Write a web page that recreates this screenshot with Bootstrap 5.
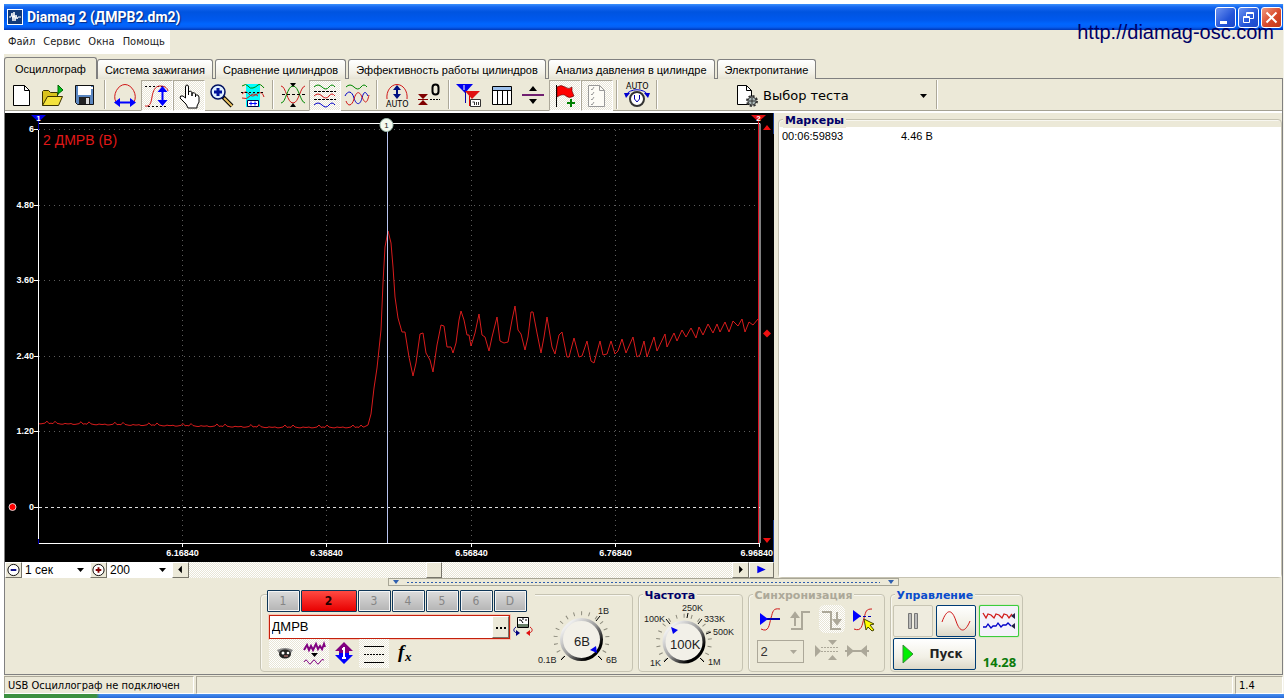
<!DOCTYPE html>
<html lang="ru">
<head>
<meta charset="utf-8">
<meta name="viewport" content="width=device-width, initial-scale=1">
<title>Diamag 2 (ДМРВ2.dm2)</title>
<link rel="stylesheet" href="https://cdn.jsdelivr.net/npm/bootstrap@5.3.0/dist/css/bootstrap.min.css">
<style>
:root{--face:#ece9d8;--edge:#808080;--soft:#c6c3b2;--navy:#000068}
body{background:#fff;color:#000;font:11px/14px "DejaVu Sans Condensed","DejaVu Sans",sans-serif}
svg{display:block}
.ms{font-family:"Liberation Sans",Arial,sans-serif;font-size:11px}
.app-window{background:var(--face);border-right:1px solid #f4f3ea}
.title-bar{height:26px;padding:0 1px 0 3px;background:linear-gradient(#3b90fb 0,#1667f0 3px,#0054e0 8px,#0059ee 16px,#0066ff 20px,#0560f5 23px,#0038b8 100%);color:#fff;font:bold 14px/26px Roboto,"Noto Sans",sans-serif}
.title-bar h1{font:inherit;text-shadow:1px 1px 1px #0a2a80}
.win-set{gap:2px}
.win-btn{width:21px;height:21px;border:1px solid #fff;border-radius:3px;background:linear-gradient(135deg,#6d93f0,#2354d8 60%,#1c48c8)}
.win-close{background:linear-gradient(135deg,#f09a80,#d8482a 55%,#c03818)}
.site-link{position:absolute;right:9px;top:16px;z-index:3;font:20px/24px "Liberation Sans",Arial,sans-serif;color:#000066;text-decoration:none}
.menu-bar{height:24px;width:166px;background:#fff}
.menu-bar a{color:#222;text-decoration:none;line-height:24px}
.tab-strip{height:22px;margin-top:3px;border-bottom:1px solid var(--edge)}
.tab-strip .tab-btn{height:20px;margin:2px 2px 0 0;border:1px solid var(--edge);border-bottom:0;border-radius:3px 3px 0 0;background:linear-gradient(#fff,#f2f0e6 70%,#e6e3d4);padding:0 7px;color:#000;white-space:nowrap;line-height:18px}
.tab-strip .tab-btn.active{height:22px;margin:0;background:var(--face);padding:0 10px}
.work{border-left:1px solid var(--edge);border-right:1px solid var(--edge);border-bottom:1px solid var(--edge)}
.tool-bar{height:34px;padding-top:1px;border-bottom:2px solid #fff;box-shadow:inset 0 -1px #a5a294}
.tool{width:32px;height:31px;padding:0;border:1px solid transparent;border-radius:0;flex:none}
.tool svg{width:30px;height:29px}
.on,.on:hover{background:repeating-conic-gradient(#fff 0 25%,#e8e5d6 0 50%) 0 0/2px 2px;border-color:#aca899 #fff #fff #aca899}
.sep{width:2px;height:29px;margin:0 3px;background:linear-gradient(90deg,#aca899 50%,#fff 50%);flex:none}
.plain-select{appearance:none;border:0;border-radius:0;padding:0 20px 0 3px;color:#000;background:#fff url("data:image/svg+xml,%3Csvg xmlns='http://www.w3.org/2000/svg' width='7' height='4'%3E%3Cpath d='M0 0h7L3.500 4z'/%3E%3C/svg%3E") no-repeat right 6px center}
.test-pick{margin-left:74px;width:198px}
.test-pick select{background-color:transparent;font:13px/18px "DejaVu Sans",sans-serif;padding-left:4px}
.scope{flex:769 1 0;min-width:0}
.scope-svg{width:100%;height:auto;background:#000;font-family:"Liberation Sans",Arial,sans-serif;font-size:9px}
.marks{flex:504 1 0;min-width:0}
.time-bar{height:16px}
.mini{width:17px;height:16px;padding:0;border:1px solid;border-color:#fff #77756a #77756a #fff;border-radius:0;background:var(--face);flex:none;display:grid;place-items:center}
.mini svg{width:15px;height:15px}
.time-bar .mini svg{height:14px}
.time-bar select{font:12px/16px "Liberation Sans",Arial,sans-serif;height:16px}
.scroll{appearance:none;flex:1 1 0;min-width:0;height:16px;margin:0;background:repeating-conic-gradient(#fff 0 25%,#e8e5d6 0 50%) 0 0/2px 2px}
.scroll::-webkit-slider-thumb{appearance:none;width:16px;height:16px;background:var(--face);border:1px solid;border-color:#fff #77756a #77756a #fff}
.group{position:relative;border:1px solid var(--soft);border-radius:4px;min-width:0;box-shadow:inset 1px 1px #f8f7f0}
.group legend{position:absolute;top:-6px;left:4px;float:none;width:auto;margin:0;padding:0 2px;background:var(--face);font:bold 11px/14px "DejaVu Sans",sans-serif;color:var(--navy);z-index:2}
.mark-list{background:#fff;margin-top:7px}
.mark-list td{padding:2px 3px;line-height:14px}
.splitter{height:9px}
.grip{width:40%;height:8px;border:1px solid #a8a696;padding:0 4px}
.dots{height:2px;flex:1;background:repeating-linear-gradient(90deg,#2f5fae 0 2px,transparent 2px 4px) 0 1px/auto 1px no-repeat}
.deck{padding:7px 5px 2px 0;gap:5px}
.deck .group{height:78px}
.chan-row{margin-top:-5px;margin-left:2px;width:268px;background:var(--face);gap:1px}
.chan{width:33px;height:22px;padding:0;border:1px solid #0f3658;border-radius:1px;background:linear-gradient(#dcdcdc,#b4b4b4);color:#858585;font-size:12px;box-shadow:inset 0 0 0 1px #f4f4f4}
.chan.cur{width:56px;background:linear-gradient(#ff4a42,#e80000);color:#200;font-weight:bold;box-shadow:none}
.name-row{margin-top:3px;gap:3px}
.name-box{width:241px;height:24px;border:1px solid #c4200c;background:#fff;box-shadow:0 0 0 1px #f8c4b4}
.name-box .mini{height:22px}
.name-box input{border:0;outline:0;min-width:0;flex:1;padding:0 2px;font:13px/20px "Liberation Sans",Arial,sans-serif}
.ico{width:30px;height:29px;padding:0;border:1px solid transparent;border-radius:0;flex:none}
.xp{height:32px;padding:0;border:1px solid #003c74;border-radius:2px;background:linear-gradient(#fff,#f2f0e6 60%,#dcd8c8);display:grid;place-items:center}
.xp.off{border-color:#c8c5b4;background:#efecdf}
.xp.live{border-color:#3ccc3c;background:#f4f2fa;box-shadow:0 0 1px #3c3}
.run{font:bold 12px/16px "DejaVu Sans",sans-serif;color:#222}
.rate{font:bold 13px/14px "Noto Sans",sans-serif;color:#0a7a0a}
.sync-select{width:47px;height:23px;margin-top:3px;border:1px solid #aca899;background-color:transparent;background-image:url("data:image/svg+xml,%3Csvg xmlns='http://www.w3.org/2000/svg' width='7' height='4'%3E%3Cpath fill='%23aca899' d='M0 0h7L3.500 4z'/%3E%3C/svg%3E");font:13px/20px "Liberation Sans",Arial,sans-serif;color:#333}
.status{height:18px;margin-top:1px;gap:2px}
.status div{border:1px solid;border-color:#aca899 #fff #fff #aca899;padding:0 3px;line-height:17px;white-space:nowrap}
.task{height:4px;background:linear-gradient(90deg,#3c9040 0 92px,transparent 96px),linear-gradient(#4a90ee,#2468d8)}
</style>
</head>
<body>
<div class="app-window mx-1 mt-1 position-relative">
  <header class="title-bar d-flex align-items-center">
    <svg width="16" height="16" viewBox="0 0 16 16" class="me-1"><rect x=".5" y=".5" width="15" height="15" fill="#123a78" stroke="#fff"/><path d="M2 8h2l1-4 1 8 1-9 1 9 1-6 1 4 1-2h3" fill="none" stroke="#fff"/></svg>
    <h1 class="m-0 flex-grow-1">Diamag 2 (ДМРВ2.dm2)</h1>
    <div class="d-flex win-set">
      <button class="btn p-0 win-btn" aria-label="Свернуть"><svg viewBox="0 0 19 19"><path d="M4 13h7v3H4z" fill="#fff"/></svg></button>
      <button class="btn p-0 win-btn" aria-label="Восстановить"><svg viewBox="0 0 19 19" fill="none" stroke="#fff"><path d="M4.500 8.500h6v6h-6zM4 9.500h7M7.500 8V4.500h7v6H11M7 5.500h8"/></svg></button>
      <button class="btn p-0 win-btn win-close" aria-label="Закрыть"><svg viewBox="0 0 19 19"><path d="M4.500 4.500l10 10m0-10l-10 10" stroke="#fff" stroke-width="2"/></svg></button>
    </div>
  </header>
  <a class="site-link" href="#">http://diamag-osc.com</a>

  <nav class="menu-bar d-flex ps-1 gap-2" aria-label="Меню">
    <a href="#">Файл</a><a href="#">Сервис</a><a href="#">Окна</a><a href="#">Помощь</a>
  </nav>

  <div class="tab-strip d-flex ms" role="tablist">
    <button class="tab-btn active" role="tab">Осциллограф</button>
    <button class="tab-btn" role="tab">Система зажигания</button>
    <button class="tab-btn" role="tab">Сравнение цилиндров</button>
    <button class="tab-btn" role="tab">Эффективность работы цилиндров</button>
    <button class="tab-btn" role="tab">Анализ давления в цилиндре</button>
    <button class="tab-btn" role="tab">Электропитание</button>
  </div>

  <main class="work">
    <div class="tool-bar d-flex">
      <button class="btn tool" aria-label="Новый"><svg viewBox="0 0 30 29"><path d="M7.500 4.500h11l5 5v15h-16z" fill="#fff" stroke="#000"/><path d="M18.500 4.500v5h5" fill="none" stroke="#000"/></svg></button>
      <button class="btn tool" aria-label="Открыть"><svg viewBox="0 0 30 29"><path d="M4.500 24.500v-14l1-1h5l2 2h7v4" fill="#d9c21c" stroke="#3a3200"/><path d="M4.500 24.500l5-9h15l-4 9z" fill="#f4e23c" stroke="#3a3200"/><path d="M20 14V4l5 5-5 4" fill="#00c020" stroke="#060"/></svg></button>
      <button class="btn tool" aria-label="Сохранить"><svg viewBox="0 0 30 29"><path d="M5.500 4.500h18v19H7.500l-2-2z" fill="#5a86c0" stroke="#111"/><path d="M8 5h13v9H8z" fill="#fff"/><path d="M9 16h11v7H9z" fill="#222"/><path d="M16 17h3v6h-3z" fill="#ddd"/><path d="M21 6h2v2h-2z" fill="#fff"/></svg></button>
      <span class="sep"></span>
      <button class="btn tool" aria-label="Период"><svg viewBox="0 0 30 29" fill="none"><path d="M6 21C2 14 8 3.500 15 3.500S28 14 24 21" stroke="#d01818"/><path d="M9 21.500h12" stroke="#00f" stroke-width="2"/><path d="M4 21.500l6-4.500v9zM26 21.500l-6-4.500v9z" fill="#00f"/></svg></button>
      <button class="btn tool on" aria-label="Амплитуда"><svg viewBox="0 0 30 29" fill="none"><path d="M3 5.500h18M6 25.500h20" stroke="#000" stroke-dasharray="2 2"/><path d="M3 25c5 1 6-3 7-9s3-11 8-11c4 0 7 1 8 5" stroke="#d01818"/><path d="M20.500 9v13" stroke="#00f" stroke-width="2"/><path d="M20.500 5l5 6h-10zM20.500 25l5-6h-10z" fill="#00f"/></svg></button>
      <button class="btn tool on" aria-label="Рука"><svg viewBox="0 0 30 29"><path d="M11.500 17V6q0-2 1.500-2t1.500 2v8-3q3-2 3.500 1v3-3q3-1 3.500 1v3-2q3-1 3.500 2v5l-2 4v2h-9l-2-4-6-6q0-3 3-2z" fill="#fff" stroke="#000"/></svg></button>
      <button class="btn tool" aria-label="Лупа"><svg viewBox="0 0 30 29"><path d="M17 16l9 9" stroke="#000" stroke-width="4"/><path d="M18 17l8 8" stroke="#e8c060" stroke-width="2"/><circle cx="12" cy="11" r="7" fill="#dff0ff" stroke="#001060" stroke-width="1.500"/><path d="M12 7v8M8 11h8" stroke="#00129a" stroke-width="3"/></svg></button>
      <button class="btn tool" aria-label="Фрагмент"><svg viewBox="0 0 30 29" fill="none"><path d="M8 3h14v23H8z" fill="#0ff"/><path d="M4 5q4-3 6 0t5 2 5-3 6 3" stroke="#080"/><path d="M4 13q4-4 7 0t8 0 7 3M4 17q5 2 8-2t8 0" stroke="#d01818"/><path d="M3 11.500h24" stroke="#000" stroke-dasharray="2 2"/><path d="M9.500 19.500h11v6h-11z" fill="#fff" stroke="#004"/><path d="M11 22.500h8M13 20.500v4M17 20.500v4" stroke="#00f"/></svg></button>
      <span class="sep"></span>
      <button class="btn tool" aria-label="Совместить"><svg viewBox="0 0 30 29" fill="none"><path d="M3 5c5 0 6 17 12 17S22 6 27 5" stroke="#d01818"/><path d="M3 22c5 0 6-17 12-17s7 16 12 17" stroke="#080"/><path d="M4 13.500h23" stroke="#000" stroke-dasharray="3 2"/><path d="M12 2h6l-3 4zM12 26h6l-3-4z" fill="#000"/></svg></button>
      <button class="btn tool on" aria-label="Разнести"><svg viewBox="0 0 30 29" fill="none"><path d="M4 6q4-4 8 0t7 0 6 0" stroke="#080"/><path d="M4 10.500h22M4 18.500h22" stroke="#000" stroke-dasharray="3 1"/><path d="M4 15q4-4 8 0t7 0 6 0" stroke="#d01818"/><path d="M4 24q4-4 8 0t7 0 6 0" stroke="#0000c8"/></svg></button>
      <button class="btn tool" aria-label="Наложить"><svg viewBox="0 0 30 29" fill="none"><path d="M4 6q4-4 8 0t7 0 6 0" stroke="#080"/><path d="M3 15c3-6 7-5 9 2s6 8 8 0 4-6 6-2" stroke="#0000c8"/><path d="M4 20c2 6 6 5 8-2s5-9 8-2 5 7 7-2" stroke="#d01818"/></svg></button>
      <span class="sep"></span>
      <button class="btn tool" aria-label="Авто масштаб"><svg viewBox="0 0 30 29" fill="none"><path d="M5 18C4 10 9 3.500 15 3.500S26 10 25 18" stroke="#d01818"/><path d="M15 7v9" stroke="#001080" stroke-width="2"/><path d="M15 4l4 5h-8zM15 18l4-5h-8z" fill="#001080"/><text x="4" y="26" font-family="DejaVu Sans" font-size="8" fill="#000">AUTO</text></svg></button>
      <button class="btn tool" aria-label="Ноль"><svg viewBox="0 0 30 29"><path d="M4 13h10l-5 5zM4 24h10l-5-5z" fill="#800000"/><path d="M4 18.500h10" stroke="#800000" /><rect x="18.500" y="3.500" width="6" height="10" rx="3" fill="none" stroke="#000" stroke-width="2"/><path d="M16 18.500h10" stroke="#000" stroke-dasharray="2 1"/></svg></button>
      <span class="sep"></span>
      <button class="btn tool" aria-label="Маркеры"><svg viewBox="0 0 30 29"><path d="M2 3h17l-8 9z" fill="#00e"/><path d="M11.500 10v12" stroke="#00a"/><path d="M11 10h15l-8 8z" fill="#e01010"/><path d="M15.500 15v10" stroke="#d00"/><path d="M10 4v5" stroke="#fff"/><path d="M16.500 18.500h10v7h-10z" fill="#fff" stroke="#333"/><path d="M18.500 21h2v3M22.500 21v3M24.500 21v3" stroke="#333" fill="none"/></svg></button>
      <button class="btn tool" aria-label="Таблица"><svg viewBox="0 0 30 29"><path d="M6.500 5.500h19v18h-19z" fill="#fff" stroke="#000"/><path d="M7 6h18v3H7z" fill="#9cc0ec"/><path d="M6 9.500h20M11.500 9v14M16.500 9v14M21.500 9v14" stroke="#000"/></svg></button>
      <button class="btn tool" aria-label="Разделить"><svg viewBox="0 0 30 29"><path d="M4 14h22" stroke="#702070" stroke-width="2"/><path d="M11 10h8l-4-5zM11 18h8l-4 5z"/></svg></button>
      <button class="btn tool on" aria-label="Флаг"><svg viewBox="0 0 30 29"><path d="M6.500 4v22" stroke="#000"/><path d="M7 6q4-3 8 0t7 0v4l2 5q-5 3-8 0t-9 1z" fill="#f00" stroke="#500" stroke-width=".6"/><path d="M21 18v8M17 22h8" stroke="#008000" stroke-width="2"/></svg></button>
      <button class="btn tool on" aria-label="Список"><svg viewBox="0 0 30 29" fill="none"><path d="M6.500 4.500h11l5 5v16h-16z" fill="#fdfcf6" stroke="#999"/><path d="M17.500 4.500v5h5" stroke="#999"/><path d="M9 8l1 1 2-3M9 13l1 1 2-3M9 18l1 1 2-3M9 23l1 1 2-3" stroke="#999"/></svg></button>
      <span class="sep"></span>
      <button class="btn tool" aria-label="Авто напряжение"><svg viewBox="0 0 30 29" fill="none"><text x="4" y="8" font-family="DejaVu Sans" font-size="8" fill="#000">AUTO</text><path d="M4 14c4-7 18-7 22 0" stroke="#0000d0"/><path d="M2 12h6l-4 5zM28 12h-6l4 5z" fill="#0000d0"/><circle cx="15" cy="18" r="7" fill="#fff" stroke="#333" stroke-width="2"/><path d="M12.500 14v4l2.500 3 2.500-3v-4" stroke="#00a"/></svg></button>
      <span class="sep"></span>
      <label class="test-pick d-flex align-items-center">
        <svg width="24" height="26" viewBox="0 0 24 26" class="flex-shrink-0"><path d="M2.500 2.500h9l5 5v14h-14z" fill="#fff" stroke="#000"/><path d="M11.500 2.500v5h5" fill="none" stroke="#000"/><circle cx="17" cy="18" r="4.500" fill="#aab4b4" stroke="#333" stroke-width="3" stroke-dasharray="2 1.500"/><circle cx="17" cy="18" r="4" fill="#aab8b8" stroke="#444"/><path d="M14 18h6M17 15v6" stroke="#333"/></svg>
        <select class="plain-select flex-grow-1" aria-label="Выбор теста"><option>Выбор теста</option></select>
      </label>
      <span class="sep"></span>
    </div>

    <div class="d-flex">
      <section class="scope" aria-label="Осциллограмма">
        <svg class="scope-svg" viewBox="5 113 769 449" role="img">
          <g stroke="#5c5c5c" stroke-dasharray="1 4">
            <path d="M182.500 130V543M326.500 130V543M471.500 130V543M615.500 130V543"/>
            <path d="M39 129.500H758M39 205.500H758M39 280.500H758M39 356.500H758M39 431.500H758"/>
          </g>
          <path d="M39 507.500H760" stroke="#ddd" stroke-dasharray="3 3"/>
          <path id="trace" fill="none" stroke="#d81c1c" d=""/>
          <path d="M38.500 124V543.500H760M38 123.500H760V543M34 129.500h5M34 205.500h5M34 280.500h5M34 356.500h5M34 431.500h5M34 507.500h5M182.500 543v4M326.500 543v4M471.500 543v4M615.500 543v4M759.500 543v4" fill="none" stroke="#fff"/>
          <path d="M758.500 121V543" stroke="#e01020"/>
          <path d="M387.500 130V543" stroke="#b8c4f0"/>
          <path d="M38.500 121v9M38.500 539v5" stroke="#0000b0"/>
          <path d="M773.500 113v21M773.500 520v42" stroke="#1a3c90"/>
          <path d="M31 115h15l-7.500 7z" fill="#0000e8"/><path d="M751 115h15l-7.500 7z" fill="#e01010"/>
          <circle cx="386.500" cy="125" r="6.500" fill="#f4faf0" stroke="#a8c8b8"/>
          <path d="M763 130h8l-4-5zM763 538h8l-4 5zM763 333.500l4-4 4 4-4 4z" fill="#f01010"/>
          <circle cx="12.500" cy="507" r="3.500" fill="#f00" stroke="#fff" stroke-width=".8"/>
          <g fill="#fff" font-size="8" font-weight="bold" text-anchor="middle"><text x="38.500" y="121">1</text><text x="758.500" y="121">2</text><text x="386.500" y="128" fill="#222" font-weight="normal">1</text></g>
          <g fill="#fff" font-weight="bold" text-anchor="end"><text x="34" y="132">6</text><text x="34" y="208">4.80</text><text x="34" y="283">3.60</text><text x="34" y="359">2.40</text><text x="34" y="434">1.20</text><text x="34" y="510">0</text></g>
          <g fill="#fff" font-weight="bold" text-anchor="middle"><text x="182.500" y="556">6.16840</text><text x="326.500" y="556">6.36840</text><text x="471.500" y="556">6.56840</text><text x="615.500" y="556">6.76840</text><text x="773" y="556" text-anchor="end">6.96840</text></g>
          <text x="43" y="145" font-size="14" fill="#e01818">2 ДМРВ (В)</text>
        </svg>
        <div class="time-bar d-flex">
          <button class="btn mini" aria-label="Уменьшить"><svg viewBox="0 0 15 15"><circle cx="7.500" cy="7.500" r="6" fill="#fff" stroke="#000"/><path d="M4.500 7.500h6" stroke="#000080" stroke-width="2"/></svg></button>
          <select class="plain-select" style="width:68px" aria-label="Развёртка"><option>1 сек</option></select>
          <button class="btn mini" aria-label="Увеличить"><svg viewBox="0 0 15 15"><circle cx="7.500" cy="7.500" r="6" fill="#fff" stroke="#000"/><path d="M4.500 7.500h6M7.500 4.500v6" stroke="#800000" stroke-width="2"/></svg></button>
          <select class="plain-select" style="width:65px" aria-label="Масштаб"><option>200</option></select>
          <button class="btn mini" aria-label="Влево"><svg viewBox="0 0 15 15"><path d="M9 3v8L5 7z"/></svg></button>
          <input type="range" class="scroll" min="0" max="100" value="45" aria-label="Прокрутка">
          <button class="btn mini" aria-label="Вправо"><svg viewBox="0 0 15 15"><path d="M6 3v8l4-4z"/></svg></button>
          <button class="btn mini w-auto px-1" aria-label="Воспроизвести"><svg viewBox="0 0 15 15"><path d="M3 3v8l9-4z" fill="#00e"/></svg></button>
        </div>
      </section>
      <section class="marks d-flex ps-1 pt-1">
        <fieldset class="group flex-grow-1 d-flex" style="margin-top:2px">
          <legend>Маркеры</legend>
          <div class="mark-list flex-grow-1">
            <table class="ms"><tbody><tr><td style="width:119px">00:06:59893</td><td>4.46 В</td></tr></tbody></table>
          </div>
        </fieldset>
      </section>
    </div>

    <div class="splitter">
      <div class="grip mx-auto d-flex align-items-center gap-2">
        <svg width="6" height="4"><path d="M0 0h6L3 4z" fill="#2f5fae"/></svg><span class="dots"></span><svg width="6" height="4"><path d="M0 0h6L3 4z" fill="#2f5fae"/></svg>
      </div>
    </div>

    <div class="deck d-flex justify-content-center">
      <fieldset class="group d-flex" style="width:373px">
        <div class="ps-1 flex-shrink-0" style="width:274px">
          <div class="chan-row d-flex">
            <button class="btn chan">1</button><button class="btn chan cur">2</button><button class="btn chan">3</button><button class="btn chan">4</button><button class="btn chan">5</button><button class="btn chan">6</button><button class="btn chan">D</button>
          </div>
          <div class="name-row d-flex align-items-center ps-1">
            <div class="name-box d-flex"><input type="text" value="ДМРВ" aria-label="Название канала"><button class="btn mini" aria-label="Выбрать"><svg viewBox="0 0 15 15"><path d="M3 7h2v2H3zM7 7h2v2H7zM11 7h2v2h-2z"/></svg></button></div>
            <button class="btn p-0 border-0" aria-label="Прибор"><svg width="20" height="20" viewBox="0 0 20 20" fill="none"><path d="M4.500.500h11v10h-11z" fill="#fff" stroke="#000"/><path d="M5 7h10v3H5z" fill="#698069"/><path d="M6 3h2M9 2h2M12 3h2M8 3l2 3" stroke="#000"/><path d="M3 10c-3 2-3 5 1 6" stroke="#000080"/><path d="M3 13l4 3-4 3z" fill="#000080"/><path d="M17 10c3 2 3 5-1 6" stroke="#d01010"/><path d="M17 13l-4 3 4 3z" fill="#e01010"/></svg></button>
          </div>
          <div class="d-flex ps-1">
            <button class="btn ico on" aria-label="Показать"><svg viewBox="0 0 28 27"><path d="M7 10q8-4 16 0l-2 3H9z" fill="#888"/><ellipse cx="15" cy="14" rx="6" ry="4.500" fill="#222"/><circle cx="13" cy="13" r="1.500" fill="#fff"/><circle cx="18" cy="13" r="1.300" fill="#fff"/><path d="M14 16h4" stroke="#d88"/></svg></button>
            <button class="btn ico on" aria-label="Фильтр"><svg viewBox="0 0 28 27" fill="none"><path d="M4 10l3-5 2 5 2-4 2 4 3-6 2 5 2-3 2 3 2-5 1 3" stroke="#800080" stroke-width="2"/><path d="M11 13h7l-3.500 4z" fill="#000"/><path d="M4 22q2-4 4 0t4 0 4 0 4 0 4-2" stroke="#800080"/></svg></button>
            <button class="btn ico" aria-label="Инвертировать"><svg viewBox="0 0 28 27"><path d="M14 2l9 9h-4v3H9v-3H5z" fill="#800080"/><path d="M14 24l9-9h-4v-2H9v2H5z" fill="#00f"/><path d="M14 7v11M12 9h3M12 18h4" stroke="#fff" stroke-width="2"/></svg></button>
            <button class="btn ico on" aria-label="Линии"><svg viewBox="0 0 28 27"><path d="M4 6.500h20M4 22.500h20" stroke="#000"/><path d="M4 14.500h20" stroke="#000" stroke-dasharray="2 1"/></svg></button>
            <button class="btn ico" aria-label="Функция"><svg viewBox="0 0 28 27" font-family="Liberation Serif" font-weight="bold" font-style="italic"><text x="8" y="18" font-size="19">f</text><text x="15" y="21" font-size="13">x</text></svg></button>
          </div>
        </div>
        <svg width="96" height="76" viewBox="534 596 96 76" font-family="Liberation Sans" font-size="9" fill="none">
          <defs><linearGradient id="rim" x1="0" y1="0" x2="1" y2="1"><stop offset=".15" stop-color="#eee"/><stop offset=".5" stop-color="#999"/><stop offset=".8" stop-color="#000"/></linearGradient></defs>
          <path d="M562.300 658.700A26 26 0 1 1 598.700 658.700" pathLength="161" stroke="#8c8a7c" stroke-width="4" stroke-dasharray="1.300 8.700"/>
          <circle cx="580.500" cy="640.500" r="20" fill="#f2f0e8" stroke="url(#rim)" stroke-width="3"/>
          <path d="M560 661l4-4M601 661l-4-4M595 622l4-5" stroke="#000"/>
          <path d="M589 651l6-4 1 7z" fill="#00e"/>
          <g fill="#222"><text x="597" y="615">1В</text><text x="537" y="664">0.1В</text><text x="605" y="664">6В</text><text x="573" y="647" font-size="13">6В</text></g>
        </svg>
      </fieldset>

      <fieldset class="group" style="width:105px">
        <legend>Частота</legend>
        <svg width="103" height="76" viewBox="639 596 103 76" font-family="Liberation Sans" font-size="9" fill="none">
          <path d="M665.600 661.100A26 26 0 1 1 702.400 661.100" pathLength="161" stroke="#8c8a7c" stroke-width="4" stroke-dasharray="1.300 8.700"/>
          <circle cx="684" cy="643" r="20" fill="#f2f0e8" stroke="url(#rim)" stroke-width="3"/>
          <path d="M664 663l4-4M704 663l-4-4M687 619l1-5M698 625l4-5M706 635l5-2M670 625l-4-5" stroke="#000"/>
          <path d="M671 628l7 3-5 4z" fill="#00e"/>
          <g fill="#222"><text x="682" y="612">250K</text><text x="644" y="623">100K</text><text x="704" y="623">333K</text><text x="713" y="636">500K</text><text x="650" y="667">1K</text><text x="708" y="666">1M</text><text x="670" y="650" font-size="13">100K</text></g>
        </svg>
      </fieldset>

      <fieldset class="group px-2" style="width:137px;padding-top:10px">
        <legend style="color:#aca899">Синхронизация</legend>
        <div class="d-flex justify-content-between">
          <button class="btn p-0 border-0" aria-label="Уровень"><svg width="26" height="28" viewBox="0 0 26 28" fill="none"><path d="M4 24c8 4 8-4 10-11s2-10 9-9" stroke="#d01818"/><path d="M3 14h20" stroke="#0000b0" stroke-width="2"/><path d="M3 8l8 6-8 6z" fill="#00f"/></svg></button>
          <button class="btn p-0 border-0" aria-label="Фронт"><svg width="26" height="28" viewBox="0 0 26 28" fill="none" stroke="#aca899" stroke-width="2"><path d="M3 24h11V7h8M7 21V10"/><path d="M4 12l3-4 3 4z" fill="#aca899"/></svg></button>
          <button class="btn p-0 border-0 on" aria-label="Спад"><svg width="26" height="28" viewBox="0 0 26 28" fill="none" stroke="#aca899" stroke-width="2"><path d="M3 7h9v17h10M18 7v9"/><path d="M15 15h6l-3 4z" fill="#aca899"/></svg></button>
          <button class="btn p-0 border-0" aria-label="Выбор уровня"><svg width="26" height="28" viewBox="0 0 26 28" fill="none"><path d="M4 24c8 3 8-4 10-11s2-9 8-9" stroke="#d01818"/><path d="M3 11.500h20" stroke="#0000b0" stroke-dasharray="3 2"/><path d="M3 5l8 6-8 6z" fill="#00f"/><path d="M14 14l10 5-4 1 4 5-2 1-4-4-2 3z" fill="#ff0" stroke="#440"/></svg></button>
        </div>
        <div class="d-flex align-items-center pt-1">
          <select class="plain-select sync-select me-2" aria-label="Канал синхронизации"><option>2</option></select>
          <svg width="30" height="24" viewBox="0 0 30 24" fill="#aca899"><path d="M3 7l6 6-6 6zM16 2h9l-4.500 5zM16 22h9l-4.500-5z"/><path d="M9 9.500h17M9 13.500h17" stroke="#aca899" stroke-dasharray="2 1"/></svg>
          <svg width="30" height="24" viewBox="0 0 30 24" fill="#aca899"><path d="M5 7l7 6-7 6zM25 7l-7 6 7 6z"/><path d="M3 13h24" stroke="#aca899" stroke-width="2"/></svg>
        </div>
      </fieldset>

      <fieldset class="group" style="width:133px;padding:10px 2px 0">
        <legend style="color:#0a4ccc">Управление</legend>
        <div class="d-flex" style="gap:3px">
          <button class="btn xp off" style="width:40px" aria-label="Пауза"><svg width="12" height="16"><path d="M1.500.500h3v15h-3zM7.500.500h3v15h-3z" fill="#bbb" stroke="#777"/></svg></button>
          <button class="btn xp" style="width:40px" aria-label="Синусоида"><svg width="30" height="22" fill="none"><path d="M1 12C6-2 11-1 15 11s9 12 14 0" stroke="#d01818"/></svg></button>
          <button class="btn xp live" style="width:40px" aria-label="Сигналы"><svg width="34" height="22" fill="none"><path d="M1 3l3 5 2-4 3 1 3 3 2-4 3 1 3 3 2-4 3 1 2 3 3-4" stroke="#d01818" stroke-width="1.300"/><path d="M1 17h3l2-3 3 4 2-2h3l2-3 3 4 2-2h3l2-2 3 3" stroke="#0000c8" stroke-width="1.300"/><path d="M33 3v6l-4-3zM33 13v6l-4-3z" fill="#224"/></svg></button>
        </div>
        <div class="d-flex align-items-center" style="margin-top:1px">
          <button class="btn xp run d-flex align-items-center ps-2" style="width:83px"><svg width="12" height="20"><path d="M1 1l10 9-10 9z" fill="#00f000" stroke="#3a8a3a"/></svg><span class="flex-grow-1 ps-1">Пуск</span></button>
          <output class="rate flex-grow-1 text-center pt-3 ps-1">14.28</output>
        </div>
      </fieldset>
    </div>
  </main>

  <footer class="status d-flex">
    <div style="width:190px">USB Осциллограф не подключен</div>
    <div class="flex-grow-1"></div>
    <div style="width:48px">1.4</div>
  </footer>
</div>
<div class="task mx-1"></div>
<script>
// Signal samples as x,y pairs: flat idle part, then the spike and its ringing.
const idle = [];
for (let x = 39; x < 364; x += 2) {
  const n = (x * x * 13) % 17;
  idle.push([x, 423 + Math.min(4, (x - 39) / 60) + (n === 4 ? -2 : (n % 3) * 0.4)]);
}
const ring = "364,427 368,425 371,414 374,388 377,368 381,330 383,283 385,247 388,231 391,243 393,267 395,297 398,318 402,332 405,332 409,357 413,376 416,363 420,334 423,333 426,353 430,360 433,372 437,345 441,325 444,326 447,347 451,347 453,353 456,343 459,320 461,311 464,320 467,335 469,335 471,346 475,333 479,314 482,335 485,337 489,351 492,337 497,317 500,341 504,343 508,342 512,320 515,306 518,330 521,334 525,350 528,337 531,312 533,312 537,333 541,353 544,337 547,317 552,347 555,354 559,335 562,332 567,357 569,357 574,338 579,357 582,356 587,341 591,361 594,363 600,341 603,355 607,354 611,341 615,354 618,351 622,339 626,353 633,337 637,357 640,355 644,341 647,357 654,337 657,351 665,334 667,347 674,333 677,341 682,330 686,337 691,328 696,338 699,327 703,335 708,324 713,333 717,324 720,332 725,322 729,332 733,321 738,326 742,319 745,332 749,322 753,325 758,319";
document.getElementById("trace").setAttribute("d", "M" + idle.map(p => p.join(",")).join(" ") + " " + ring);
</script>
<script src="https://cdn.jsdelivr.net/npm/bootstrap@5.3.0/dist/js/bootstrap.bundle.min.js"></script>
</body>
</html>
